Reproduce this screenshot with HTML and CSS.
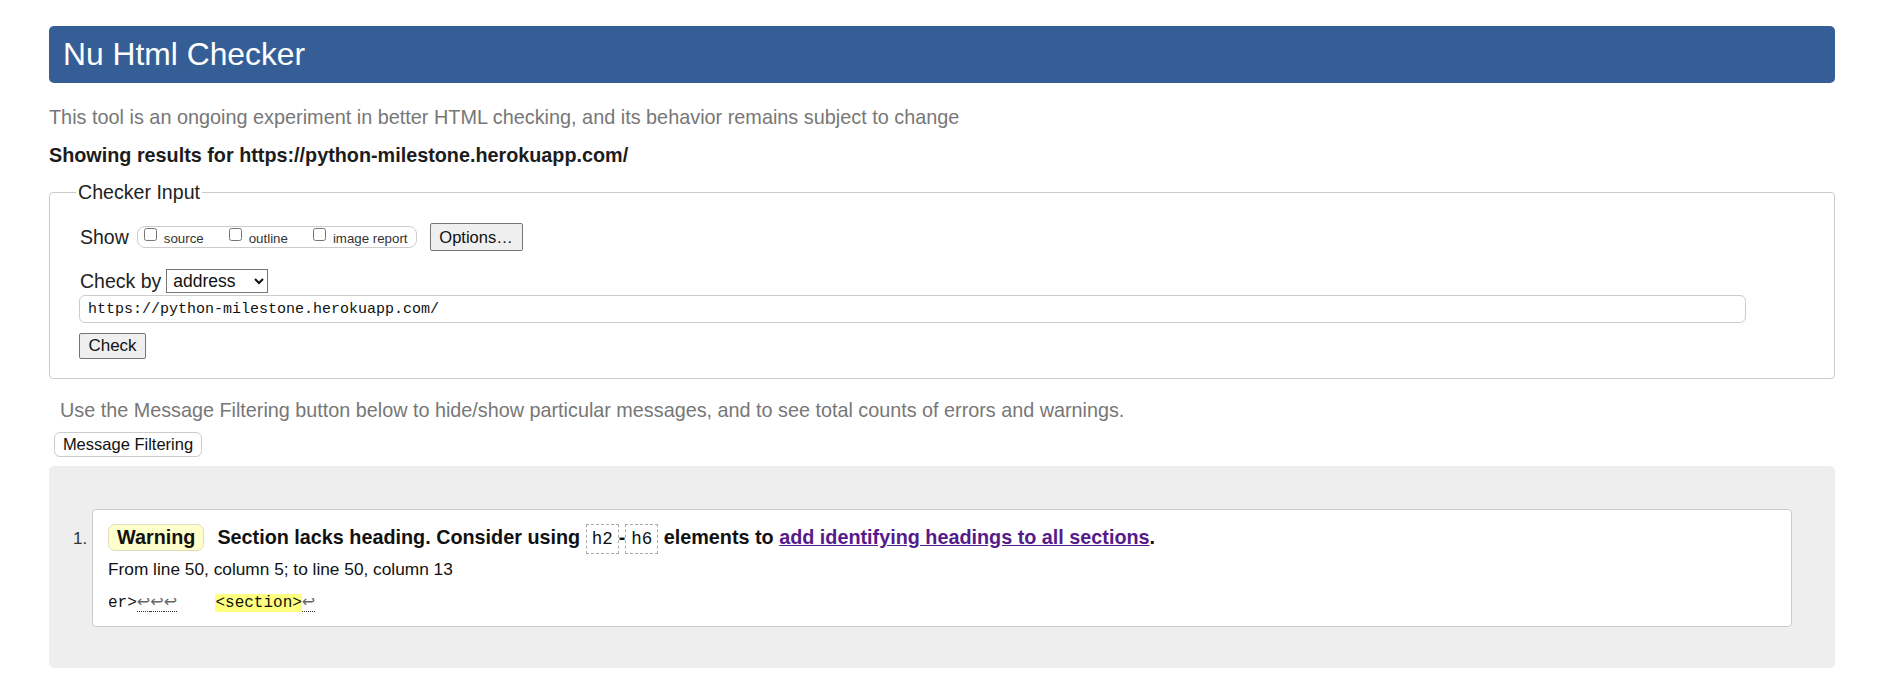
FILE: index.html
```html
<!DOCTYPE html>
<html lang="en">
<head>
<meta charset="utf-8">
<title>Showing results for https://python-milestone.herokuapp.com/ - Nu Html Checker</title>
<link rel="stylesheet" href="styles.css">
</head>
<body>
<h1 class="title">Nu Html Checker</h1>
<p class="about">This tool is an ongoing experiment in better HTML checking, and its behavior remains subject to change</p>
<p class="showing">Showing results for https://python-milestone.herokuapp.com/</p>
<form class="checker-form">
  <fieldset class="checker">
    <legend class="checker-legend">Checker Input</legend>
    <div class="row row-show">
      <span class="row-label">Show</span>
      <span class="show-group">
        <label class="opt"><input type="checkbox" class="cb">source</label>
        <label class="opt"><input type="checkbox" class="cb">outline</label>
        <label class="opt"><input type="checkbox" class="cb">image report</label>
      </span>
      <button type="button" class="btn btn-options">Options…</button>
    </div>
    <div class="row row-by">
      <span class="row-label">Check by</span>
      <select class="by-select"><option>address</option><option>file upload</option><option>text input</option></select>
    </div>
    <div class="row row-url">
      <input type="text" class="url-input" value="https://python-milestone.herokuapp.com/">
    </div>
    <div class="row row-submit">
      <button type="button" class="btn btn-check">Check</button>
    </div>
  </fieldset>
</form>
<p class="filter-note">Use the Message Filtering button below to hide/show particular messages, and to see total counts of errors and warnings.</p>
<button type="button" class="btn-filter">Message Filtering</button>
<div class="results">
  <ol class="messages">
    <li class="message">
      <p class="msg-title"><span class="badge">Warning</span><span class="msg-text">Section lacks heading. Consider using <code class="el">h2</code>-<code class="el">h6</code> elements to <a class="msg-link" href="#">add identifying headings to all sections</a>.</span></p>
      <p class="location">From line 50, column 5; to line 50, column 13</p>
      <p class="extract"><code class="ext">er&gt;<span class="lf">↩</span><span class="lf">↩</span><span class="lf">↩</span>    <b class="hl">&lt;section&gt;</b><span class="lf">↩</span></code></p>
    </li>
  </ol>
</div>
</body>
</html>
```
FILE: styles.css
```css
html, body {
  background: #fff;
}
body {
  margin: 0;
  padding: 26px 46px 26px 49px;
  font-family: "Liberation Sans", Arial, sans-serif;
  color: #222;
}
.title {
  margin: 0;
  height: 57px;
  line-height: 56px;
  padding-left: 14px;
  background: #365e96;
  color: #fff;
  font-size: 31.8px;
  font-weight: normal;
  border-radius: 5px;
}
.about {
  margin: 23px 0 0;
  font-size: 19.85px;
  line-height: 23px;
  color: #777;
}
.showing {
  margin: 15px 0 0;
  font-size: 19.8px;
  line-height: 23px;
  font-weight: bold;
  color: #1c1c1c;
}
.checker-form {
  margin: 0;
}
.checker {
  margin: 14px 0 0;
  padding: 19px 0 19px 30px;
  border: 1px solid #ccc;
  border-radius: 4px;
  min-width: 0;
}
.checker-legend {
  font-size: 19.6px;
  line-height: 23px;
  padding: 0 2px;
  margin-left: -4px;
  color: #222;
}
.row {
  display: flex;
  align-items: center;
}
.row-label {
  font-size: 19.5px;
  line-height: 23px;
  color: #222;
}
.row-show {
  height: 28px;
}
.show-group {
  display: flex;
  align-items: flex-start;
  height: 22px;
  box-sizing: border-box;
  margin-left: 8px;
  padding: 0 8px 0 6px;
  border: 1px solid #ccc;
  border-radius: 8px;
}
.opt {
  display: flex;
  align-items: flex-start;
  font-size: 13.3px;
  line-height: 16px;
  padding-top: 4px;
  color: #333;
  margin-right: 25px;
}
.opt:last-child {
  margin-right: 0;
}
.cb {
  width: 13px;
  height: 13px;
  margin: -3px 7px 0 0;
}
.btn {
  font-family: "Liberation Sans", Arial, sans-serif;
  background: #efefef;
  border: 1px solid #767676;
  border-radius: 2px;
  color: #111;
  padding: 0;
  box-sizing: border-box;
}
.btn-options {
  margin-left: 13px;
  width: 93px;
  height: 28px;
  font-size: 16.5px;
}
.row-by {
  margin-top: 18px;
  height: 24px;
}
.by-select {
  margin-left: 5px;
  width: 102px;
  height: 24px;
  font-family: "Liberation Sans", Arial, sans-serif;
  font-size: 17.5px;
  color: #111;
  border: 1px solid #767676;
  border-radius: 0;
  background: #fff;
  padding: 0 0 0 2px;
}
.row-url {
  margin-top: 2px;
}
.url-input {
  margin-left: -1px;
  width: 1667px;
  height: 28px;
  box-sizing: border-box;
  border: 1px solid #ccc;
  border-radius: 6px;
  padding: 0 8px;
  font-family: "Liberation Mono", "DejaVu Sans Mono", monospace;
  font-size: 15px;
  color: #111;
}
.row-submit {
  margin-top: 10px;
}
.btn-check {
  margin-left: -1px;
  width: 67px;
  height: 26px;
  font-size: 17px;
}
.filter-note {
  margin: 20px 0 0;
  padding-left: 11px;
  font-size: 19.8px;
  line-height: 23px;
  color: #777;
}
.btn-filter {
  display: block;
  margin: 10px 0 0 5px;
  width: 148px;
  height: 25px;
  box-sizing: border-box;
  padding: 0;
  background: #fff;
  border: 1px solid #ccc;
  border-radius: 6px;
  font-family: "Liberation Sans", Arial, sans-serif;
  font-size: 16.5px;
  color: #111;
}
.results {
  margin-top: 9px;
  background: #eee;
  border-radius: 5px;
  padding: 43px 43px 41px 0;
}
.messages {
  margin: 0;
  padding-left: 43px;
}
.message {
  background: #fff;
  border: 1px solid #ccc;
  border-radius: 4px;
  padding: 12px 15px 13px 15px;
  font-size: 17px;
  color: #333;
}
.message::marker {
  color: #333;
}
.msg-title {
  margin: 0;
  font-size: 19.8px;
  line-height: 30px;
  font-weight: bold;
  color: #111;
}
.badge {
  display: inline-block;
  line-height: 21px;
  padding: 2px 8px;
  margin-right: 13px;
  background: #ffffcc;
  border: 1px solid #ddddbb;
  border-radius: 7px;
  color: #111;
}
.el {
  font-family: "Liberation Mono", "DejaVu Sans Mono", monospace;
  font-size: 17.5px;
  font-weight: normal;
  line-height: 1;
  padding: 4px 5px;
  border: 1px dashed #aaa;
  color: #111;
}
.msg-link {
  color: #551a8b;
  text-decoration: underline;
}
.location {
  margin: 7px 0 0;
  font-size: 17.3px;
  line-height: 20px;
  color: #111;
}
.extract {
  margin: 13px 0 0;
  line-height: 20px;
}
.ext {
  font-family: "Liberation Mono", "DejaVu Sans Mono", monospace;
  font-size: 16px;
  white-space: pre;
  color: #111;
}
.lf {
  font-family: "DejaVu Sans", sans-serif;
  font-size: 16px;
  line-height: 1;
  color: #666;
  border-bottom: 1px dotted #333;
}
.hl {
  font-weight: normal;
  background: #ffff80;
}
```
